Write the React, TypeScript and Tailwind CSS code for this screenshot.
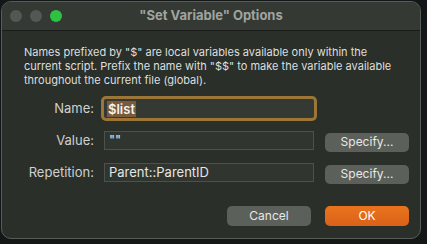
export default function App() {
  return (
    <div
      className="h-[244px] w-[427px] overflow-hidden bg-[#141718] pl-px pt-px"
      style={{ fontFamily: "Inter, 'Liberation Sans', sans-serif" }}
    >
      <div className="flex h-[238px] w-[420px] flex-col overflow-hidden rounded-[10px] border border-[#585c58] bg-[#2a2f2a]">
        {/* title bar */}
        <div className="relative flex h-[29px] shrink-0 items-center justify-center border-b border-[#1a1c1a] bg-[#343933]">
          <div className="absolute left-[8px] top-[8px] flex gap-[8px]">
            <span className="h-[12px] w-[12px] rounded-full bg-[#545854]" />
            <span className="h-[12px] w-[12px] rounded-full bg-[#545854]" />
            <span className="h-[12px] w-[12px] rounded-full bg-[#2fc242]" />
          </div>
          <span className="text-[13px] font-bold text-[#a0a3a0]">"Set Variable" Options</span>
        </div>

        {/* body */}
        <div className="flex flex-col pl-[22px]">
          <p className="mt-[14px] w-[370px] text-[11px] leading-[14px] text-[#dedfde]">
            Names prefixed by "$" are local variables available only within the current script.
            Prefix the name with "$$" to make the variable available throughout the current file
            (global).
          </p>

          <div className="mt-[9px] flex flex-col gap-[7px]">
            <div className="flex h-[25px] items-center">
              <span className="w-[70px] text-right text-[13px] text-[#cfd0cf]">Name:</span>
              <div className="ml-[7px] flex h-[25px] w-[216px] items-center rounded-[5px] border-[3px] border-[#9c7636] bg-[#343933] pl-[3px]">
                <span className="bg-[#7a5a3a] px-px text-[13px] font-semibold leading-[16px] text-[#f2f2f2]">
                  $list
                </span>
              </div>
            </div>

            <div className="flex h-[25px] items-center">
              <span className="w-[70px] text-right text-[13px] text-[#cfd0cf]">Value:</span>
              <div className="ml-[10px] flex h-[19px] w-[210px] items-center border border-[#4c514b] bg-[#30352f] pl-[4px] text-[13px] text-[#e6e6e6]">
                ""
              </div>
              <button className="ml-[11px] mt-[3px] h-[19px] w-[84px] rounded-[5px] bg-[#5b615a] text-[12px] text-[#e8e8e8]">
                Specify...
              </button>
            </div>

            <div className="flex h-[25px] items-center">
              <span className="w-[70px] text-right text-[13px] text-[#cfd0cf]">Repetition:</span>
              <div className="ml-[10px] flex h-[19px] w-[210px] items-center border border-[#4c514b] bg-[#30352f] pl-[4px] text-[13px] text-[#e6e6e6]">
                Parent::ParentID
              </div>
              <button className="ml-[11px] mt-[3px] h-[19px] w-[84px] rounded-[5px] bg-[#5b615a] text-[12px] text-[#e8e8e8]">
                Specify...
              </button>
            </div>
          </div>

          <div className="mt-[21px] flex justify-end gap-[14px] pr-[11px]">
            <button className="h-[20px] w-[84px] rounded-[5px] bg-[#5b615a] text-[12px] text-[#e8e8e8]">
              Cancel
            </button>
            <button className="h-[20px] w-[84px] rounded-[5px] bg-gradient-to-b from-[#ea741c] to-[#d9611a] text-[12px] text-white">
              OK
            </button>
          </div>
        </div>
      </div>
    </div>
  );
}
